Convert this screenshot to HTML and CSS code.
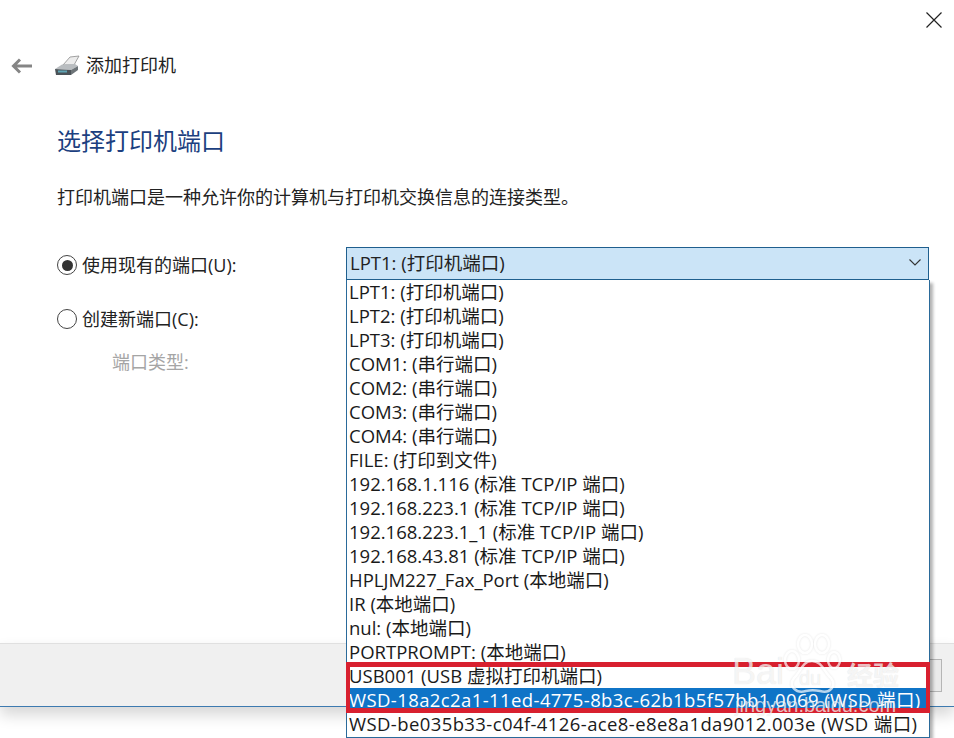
FILE: index.html
```html
<!DOCTYPE html>
<html lang="zh-CN">
<head>
<meta charset="utf-8">
<title>添加打印机</title>
<link rel="stylesheet" href="styles.css">
</head>
<body>
<div class="window">
  <div class="titlebar">
    <svg class="close" viewBox="0 0 16 16" width="16" height="16"><path d="M0.5 0.5L15.5 15.5M15.5 0.5L0.5 15.5" stroke="#222" stroke-width="1.2" fill="none"/></svg>
  </div>
  <div class="navrow">
    <svg class="back" viewBox="0 0 22 16" width="22" height="16"><path d="M2 8H21M9 1.5L2.5 8L9 14.5" stroke="#858585" stroke-width="3" fill="none"/></svg>
    <svg class="printer" viewBox="0 0 26 22" width="26" height="22">
      <path d="M9 10L16 2L25 1L20 10Z" fill="#ececec" stroke="#8c8c8c" stroke-width="0.8"/>
      <path d="M1 14L8 9.5L21 9L24 11L17 15Z" fill="#b9bdc0"/>
      <path d="M1 14L17 15V20L2 20Z" fill="#4b5358"/>
      <path d="M17 15L24 11V15L17 20Z" fill="#6d7478"/>
      <path d="M4 15.5H13V17.5H4Z" fill="#5fa5b5"/>
    </svg>
    <span class="navtitle">添加打印机</span>
  </div>
  <h1 class="heading">选择打印机端口</h1>
  <p class="desc">打印机端口是一种允许你的计算机与打印机交换信息的连接类型。</p>
  <div class="form">
    <div class="options">
      <div class="radio-row first"><span class="radio on"></span><span class="label">使用现有的端口(U):</span></div>
      <div class="radio-row"><span class="radio"></span><span class="label">创建新端口(C):</span></div>
      <div class="porttype">端口类型:</div>
    </div>
    <div class="combo">
      <span>LPT1: (打印机端口)</span>
      <svg class="chev" viewBox="0 0 12 7" width="12" height="7"><path d="M0.5 0.5L6 6L11.5 0.5" stroke="#333" stroke-width="1.1" fill="none"/></svg>
    </div>
  </div>
  <div class="footer"><div class="btn"></div></div>

  <ul class="list">
    <li>LPT1: (打印机端口)</li>
    <li>LPT2: (打印机端口)</li>
    <li>LPT3: (打印机端口)</li>
    <li>COM1: (串行端口)</li>
    <li>COM2: (串行端口)</li>
    <li>COM3: (串行端口)</li>
    <li>COM4: (串行端口)</li>
    <li>FILE: (打印到文件)</li>
    <li>192.168.1.116 (标准 TCP/IP 端口)</li>
    <li>192.168.223.1 (标准 TCP/IP 端口)</li>
    <li>192.168.223.1_1 (标准 TCP/IP 端口)</li>
    <li>192.168.43.81 (标准 TCP/IP 端口)</li>
    <li>HPLJM227_Fax_Port (本地端口)</li>
    <li>IR (本地端口)</li>
    <li>nul: (本地端口)</li>
    <li>PORTPROMPT: (本地端口)</li>
    <li>USB001 (USB 虚拟打印机端口)</li>
    <li class="sel wide">WSD-18a2c2a1-11ed-4775-8b3c-62b1b5f57bb1.0069 (WSD 端口)</li>
    <li class="wide">WSD-be035b33-c04f-4126-ace8-e8e8a1da9012.003e (WSD 端口)</li>
  </ul>
  <div class="redbox"></div>
  <div class="wm">
    <svg class="paw" viewBox="0 0 60 62" width="60" height="62" fill="none" stroke="#fff" stroke-width="2.5">
      <ellipse cx="10" cy="26" rx="7" ry="9"/>
      <ellipse cx="23" cy="10" rx="7" ry="9"/>
      <ellipse cx="40" cy="10" rx="7" ry="9"/>
      <ellipse cx="52" cy="26" rx="6" ry="8"/>
      <path d="M30 27C20 27 19 38 12 44C6 52 14 60 24 57C28 56 33 56 38 57C48 60 55 52 49 44C42 38 40 27 30 27Z"/>
    </svg>
    <span class="wm-bai">Bai</span>
    <span class="wm-du">du</span>
    <span class="wm-jy">经验</span>
    <span class="wm-url">jingyan.baidu.com</span>
  </div>
</div>
</body>
</html>
```
FILE: styles.css
```css
* { box-sizing: border-box; }
html, body { margin: 0; padding: 0; background: #fff; }
body { font-family: "Open Sans", "Noto Sans CJK SC", sans-serif; color: #1a1a1a; }
.window { position: relative; width: 954px; height: 738px; overflow: hidden; background: #fff; }
.titlebar { height: 44px; display: flex; justify-content: flex-end; padding: 12px 12px 0 0; }
.navrow { height: 43px; display: flex; align-items: center; padding-left: 11px; }
.back { margin-right: 21px; }
.printer { margin-right: 6px; }
.navtitle { font-size: 18px; line-height: 24px; color: #222; padding-bottom: 2px; }
.heading { margin: 0; padding: 39px 0 0 57px; height: 98px; font-size: 24px; line-height: 30px; font-weight: 400; color: #1c3f80; }
.desc { margin: 0; padding: 0 0 0 57px; height: 48px; font-size: 18px; line-height: 24px; color: #222; }
.form { display: flex; align-items: flex-start; height: 396px; margin-top: 14px; padding-left: 57px; }
.options { width: 289px; }
.radio-row { display: flex; align-items: center; gap: 5px; height: 24px; font-size: 18px; margin-bottom: 30px; color: #222; }
.radio-row.first { margin-top: 6px; }
.label { padding-bottom: 2px; }
.radio { width: 20px; height: 20px; border-radius: 50%; border: 1.2px solid #444; background: #fff; display: flex; align-items: center; justify-content: center; }
.radio.on::after { content: ""; width: 11px; height: 11px; border-radius: 50%; background: #333; }
.porttype { margin: -11px 0 0 55px; font-size: 18px; line-height: 24px; color: #a5a5a5; }
.combo { width: 583px; height: 34px; background: #cbe4f7; border: 1px solid #1f5f8e; border-bottom-width: 2px; display: flex; align-items: center; justify-content: space-between; padding: 0 7px 3px 3px; font-size: 18.5px; color: #222; }
.footer { height: 64px; background: #f0f0f0; border-top: 1px solid #e0e0e0; border-bottom: 1px solid #3d7ab0; box-shadow: 0 8px 14px rgba(0,0,0,.16); display: flex; justify-content: flex-end; align-items: center; padding-right: 12px; }
.btn { width: 80px; height: 33px; border: 1px solid #b5b5b5; background: #eaeaea; }
.list { position: absolute; left: 346px; top: 280px; width: 584px; height: 458px; margin: 0; padding: 0; list-style: none; background: #fff; border: 1px solid #2a6a9a; border-top: 0; box-shadow: 3px 3px 3px rgba(0,0,0,.3); font-size: 18.5px; }
.list li { height: 24px; line-height: 24px; padding-left: 2px; white-space: nowrap; color: #1a1a1a; }
.list li.wide { letter-spacing: .4px; }
.list li.sel { background: #0f74c7; color: #fff; }
.redbox { position: absolute; left: 346px; top: 662px; width: 584px; height: 51px; border: solid #d8202f; border-width: 5px 4px; }
.wm { position: absolute; left: 730px; top: 634px; width: 224px; height: 104px; color: rgba(255,255,255,.72); text-shadow: 0 0 1px rgba(0,0,0,.14); }
.paw { position: absolute; left: 52px; top: 0; opacity: .7; filter: drop-shadow(0 0 1px rgba(0,0,0,.14)); }
.wm span { position: absolute; white-space: nowrap; }
.wm-bai { left: 2px; top: 17px; font-family: "Liberation Sans", sans-serif; font-size: 36px; line-height: 42px; font-weight: 400; }
.wm-du { left: 69px; top: 32px; font-family: "Liberation Sans", sans-serif; font-size: 20px; line-height: 24px; }
.wm-jy { left: 117px; top: 25px; font-size: 26px; line-height: 30px; font-weight: 700; font-family: "Noto Sans CJK SC", sans-serif; }
.wm-url { left: 5px; top: 59px; font-size: 20px; line-height: 24px; font-family: "Liberation Sans", sans-serif; }
```
